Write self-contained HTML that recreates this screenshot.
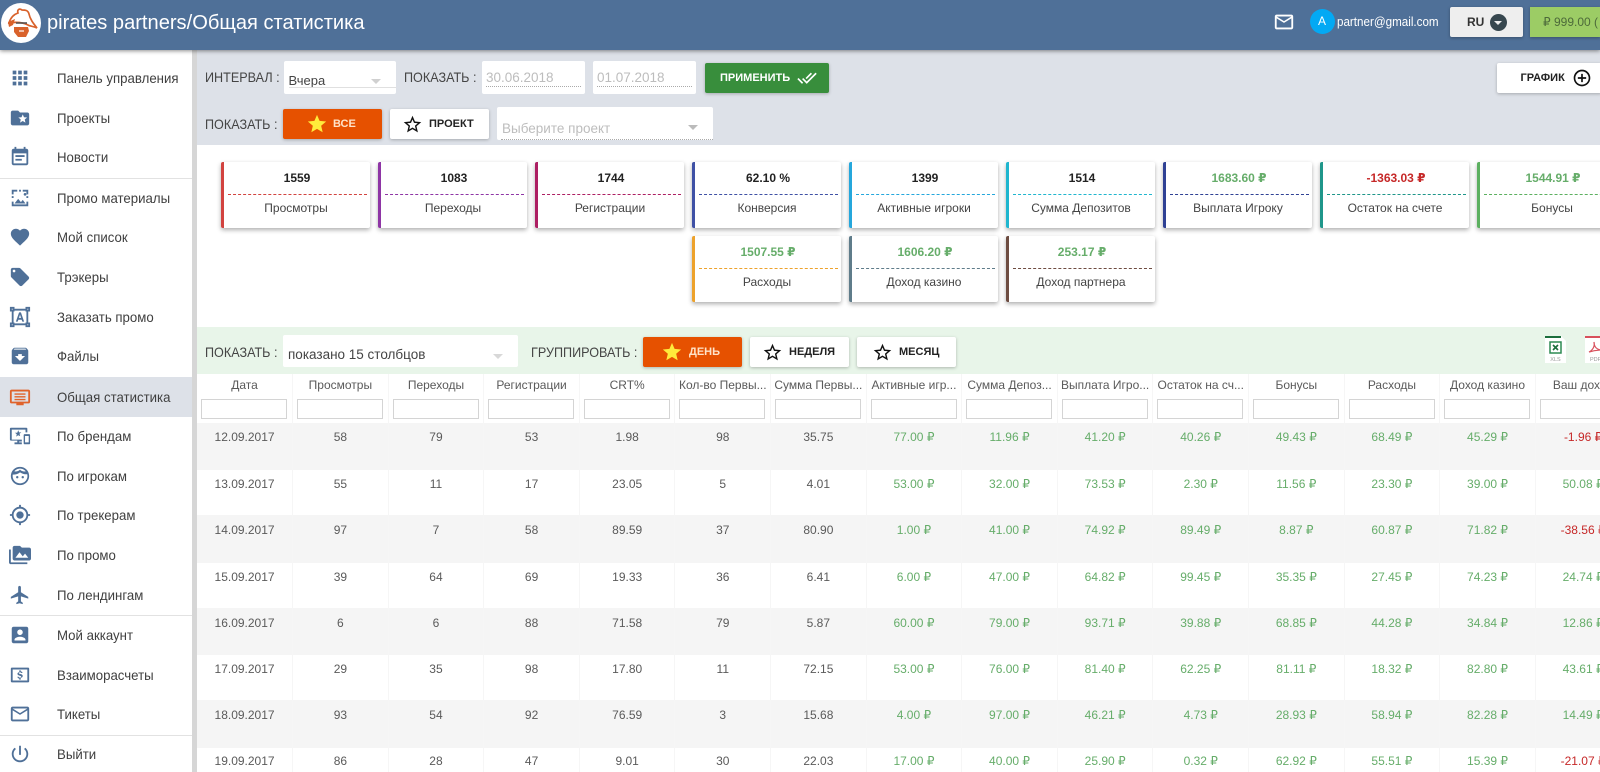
<!DOCTYPE html>
<html lang="ru">
<head>
<meta charset="utf-8">
<title>pirates partners</title>
<style>
html,body{margin:0;padding:0;width:1600px;height:772px;overflow:hidden;background:#fff}
body{font-family:"Liberation Sans","DejaVu Sans",sans-serif;color:#424242;position:relative}
#r{position:absolute;left:0;top:0;width:1600px;height:772px;overflow:hidden;filter:blur(.35px);background:#fff}
.a{position:absolute;white-space:nowrap}
.c{position:absolute;white-space:nowrap;transform:translateY(-50%);line-height:16px}
.hd{left:0;top:0;width:1600px;height:50px;background:#4f7098;box-shadow:0 1px 4px rgba(0,0,0,.45);z-index:5}
.side{left:0;top:50px;width:192px;height:722px;background:#fff}
.strip{left:192px;top:50px;width:5px;height:722px;background:#d6d6d6}
.it{position:absolute;left:56.500px;font-size:14px;line-height:16px;transform:translateY(-50%) scaleX(.945);transform-origin:left center;color:#3f3f3f;white-space:nowrap}
.ic{position:absolute;left:8.500px;width:22px;height:22px;fill:#4f7098;transform:translateY(-50%)}
.div{position:absolute;left:0;width:192px;height:1px;background:#e2e2e2}
.gray{left:197px;top:50px;width:1403px;height:95px;background:#dde1e8}
.white{background:#fff;border-radius:2px}
.lb{font-size:14px;color:#444;transform:translateY(-50%) scaleX(.9);transform-origin:left center}
.btn{position:absolute;height:30px;width:99px;background:#fff;border-radius:2px;box-shadow:0 1px 3px rgba(0,0,0,.25)}
.btn.o{background:#e65100}
.btxt{font-size:11px;font-weight:bold;color:#222}
.card{position:absolute;width:146px;height:66px;background:#fff;border-left:3px solid;border-radius:2px;box-shadow:0 2px 5px rgba(0,0,0,.32)}
.card .v{position:absolute;left:0;right:0;top:8px;text-align:center;font-size:12px;font-weight:bold;line-height:16px;color:#222}
.card .d{position:absolute;left:4px;width:139px;top:32px;border-top:1px dashed}
.card .l{position:absolute;left:-2px;right:0;top:38px;text-align:center;font-size:12px;line-height:16px;color:#444}
.g{color:#66ad6a!important}
.rd{color:#c62828!important}
.green{left:197px;top:327px;width:1403px;height:47px;background:#e8f5e9}
.arrow{position:absolute;width:0;height:0;border-left:5px solid transparent;border-right:5px solid transparent;border-top:5px solid #c8c8c8}
.tw{position:absolute;left:197px;top:374px;width:1403px;height:398px;overflow:hidden}
table{border-collapse:collapse;table-layout:fixed;width:1434px;font-size:12px;color:#5a5a5a}
td,th{width:95.6px;padding:0 3px;text-align:center;vertical-align:top;box-sizing:border-box;border-right:1px solid #f6f6f6;overflow:hidden;white-space:nowrap;font-weight:normal}
.th td{height:22px;line-height:22px;background:#fff}
.fl td{height:27px;padding:3px 5px 0;background:#fff}
.fl i{display:block;height:18px;box-sizing:content-box;margin-left:-1px;border:1px solid #d4d4d4;border-width:1px 1px 1.5px;width:84px;background:#fff}
.rw td{line-height:14px;padding-top:7px}
.rw.p8 td{padding-top:8px}
.rw.p6 td{padding-top:6px}
.s td{background:#f5f5f5}
</style>
</head>
<body>
<div id="r">
<!-- header -->
<div class="a hd">
  <svg class="a" style="left:1px;top:2px" width="42" height="42" viewBox="0 0 42 42">
    <circle cx="20" cy="21" r="20" fill="#fff"/>
    <path d="M8 21C10 14 14 12 17 11C16 8 18 6 21 8C24 8 27 8 28 12C29 17 32 21 36 26C32 24 28 24 27 23C21 20 14 20 8 21Z" fill="none" stroke="#d9622b" stroke-width="1.700"/>
    <path d="M7 20L14 17L12 23L8 25Z" fill="#d9622b"/>
    <path d="M13 25H27L28 29L25 35H17L13 30Z" fill="#d9622b"/>
    <path d="M15 21H26" stroke="#555" stroke-width="1.600"/>
    <path d="M18 29H23" stroke="#fff" stroke-width="1.200"/>
  </svg>
  <div class="c" style="left:47px;top:23px;font-size:20.100px;color:#fff;line-height:24px">pirates partners/Общая статистика</div>
  <svg class="a" style="left:1273px;top:10px;fill:#fff" width="22" height="24" viewBox="0 0 24 24"><path d="M20 4H4c-1.100 0-1.990.9-1.990 2L2 18c0 1.100.9 2 2 2h16c1.100 0 2-.9 2-2V6c0-1.100-.9-2-2-2zm0 14H4V8l8 5 8-5v10zm-8-7L4 6h16l-8 5z"/></svg>
  <div class="a" style="left:1309.500px;top:9px;width:25px;height:25px;border-radius:50%;background:#03a9f4;color:#fff;font-size:12px;line-height:25px;text-align:center">A</div>
  <div class="c" style="left:1336.500px;top:22px;font-size:12.500px;color:#fff;transform:translateY(-50%) scaleX(.93);transform-origin:left center">partner@gmail.com</div>
  <div class="a" style="left:1450px;top:7px;width:73px;height:30px;background:#eeeeee;border-radius:2px;box-shadow:0 1px 3px rgba(0,0,0,.3)"></div>
  <div class="c" style="left:1467px;top:22px;font-size:12px;font-weight:bold;color:#333">RU</div>
  <div class="a" style="left:1489.500px;top:14px;width:17px;height:17px;border-radius:50%;background:#37474f"></div>
  <div class="a" style="left:1494px;top:21px;width:0;height:0;border-left:4px solid transparent;border-right:4px solid transparent;border-top:4px solid #eee"></div>
  <div class="a" style="left:1530px;top:7px;width:70px;height:30px;background:#9ccc65;box-shadow:0 1px 3px rgba(0,0,0,.3)"></div>
  <div class="c" style="left:1543px;top:22px;font-size:12px;color:#4d6a3a">₽ 999.00 (</div>
</div>
<!-- sidebar -->
<div class="a side"></div>
<div class="a strip"></div>
<div class="a" style="left:0;top:377px;width:192px;height:40px;background:#dde1e8"></div>
<div class="div" style="top:178px"></div>
<div class="div" style="top:615px"></div>
<div class="div" style="top:735px"></div>

<svg class="ic" style="top:78px" viewBox="0 0 24 24"><path d="M4 8h4V4H4v4zm6 12h4v-4h-4v4zm-6 0h4v-4H4v4zm0-6h4v-4H4v4zm6 0h4v-4h-4v4zm6-10v4h4V4h-4zm-6 4h4V4h-4v4zm6 6h4v-4h-4v4zm0 6h4v-4h-4v4z"/></svg>
<div class="it" style="top:78px">Панель управления</div>
<svg class="ic" style="top:118px" viewBox="0 0 24 24"><path d="M20 6h-8l-2-2H4c-1.100 0-1.990.9-1.990 2L2 18c0 1.100.9 2 2 2h16c1.100 0 2-.9 2-2V8c0-1.100-.9-2-2-2zm-2.060 11L15 15.280 12.060 17l.78-3.330-2.590-2.240 3.410-.29L15 8l1.340 3.140 3.410.29-2.590 2.240.78 3.330z"/></svg>
<div class="it" style="top:118px">Проекты</div>
<svg class="ic" style="top:157px" viewBox="0 0 24 24"><path d="M17 10H7v2h10v-2zm2-7h-1V1h-2v2H8V1H6v2H5c-1.110 0-1.990.9-1.990 2L3 19c0 1.100.89 2 2 2h14c1.100 0 2-.9 2-2V5c0-1.100-.9-2-2-2zm0 16H5V8h14v11zm-5-5H7v2h7v-2z"/></svg>
<div class="it" style="top:157px">Новости</div>
<svg class="ic" style="top:198px" viewBox="0 0 24 24"><path d="M3 3h6v2H5v3H3V3zm12 0h6v5h-2V5h-4V3zM3 16h2v3h14v-3h2v5H3v-5zm3 2l4-5 3 3.500 2-2.500 3 4H6zM11 3h2v2h-2zM3 10h2v2H3zm16 0h2v2h-2zm-3-2a1.500 1.500 0 1 1 0 .01z"/></svg>
<div class="it" style="top:198px">Промо материалы</div>
<svg class="ic" style="top:237px" viewBox="0 0 24 24"><path d="M12 21.350l-1.450-1.320C5.400 15.360 2 12.280 2 8.500 2 5.420 4.420 3 7.500 3c1.740 0 3.410.81 4.500 2.090C13.090 3.810 14.760 3 16.500 3 19.580 3 22 5.420 22 8.500c0 3.780-3.400 6.860-8.550 11.540L12 21.350z"/></svg>
<div class="it" style="top:237px">Мой список</div>
<svg class="ic" style="top:277px" viewBox="0 0 24 24"><path d="M21.410 11.580l-9-9C12.050 2.220 11.550 2 11 2H4c-1.100 0-2 .9-2 2v7c0 .55.22 1.050.59 1.420l9 9c.36.36.86.58 1.410.58.55 0 1.050-.22 1.410-.59l7-7c.37-.36.59-.86.59-1.410 0-.55-.23-1.060-.59-1.420zM5.500 7C4.670 7 4 6.330 4 5.500S4.670 4 5.500 4 7 4.670 7 5.500 6.330 7 5.500 7z"/></svg>
<div class="it" style="top:277px">Трэкеры</div>
<svg class="ic" style="top:317px" viewBox="0 0 24 24"><path d="M1 1h5v2h12V1h5v5h-2v12h2v5h-5v-2H6v2H1v-5h2V6H1V1zm2 2v1h1V3H3zm17 0v1h1V3h-1zM5 6v12h1v1h12v-1h1V6h-1V5H6v1H5zM3 20v1h1v-1H3zm17 0v1h1v-1h-1zM11 7h2l3.500 10h-2l-.7-2h-3.600l-.7 2h-2L11 7zm-.2 6h2.400L12 9.500 10.800 13z"/></svg>
<div class="it" style="top:317px">Заказать промо</div>
<svg class="ic" style="top:356px" viewBox="0 0 24 24"><path d="M20.540 5.230l-1.390-1.680C18.880 3.210 18.470 3 18 3H6c-.47 0-.88.21-1.160.55L3.460 5.230C3.170 5.570 3 6.020 3 6.500V19c0 1.100.9 2 2 2h14c1.100 0 2-.9 2-2V6.500c0-.48-.17-.93-.46-1.270zM12 17.500L6.500 12H10v-2h4v2h3.500L12 17.500zM5.120 5l.81-1h12l.94 1H5.120z"/></svg>
<div class="it" style="top:356px">Файлы</div>
<svg class="ic" style="top:397px;fill:#e0622a" viewBox="0 0 24 24"><path d="M3 4h18a2 2 0 0 1 2 2v11a2 2 0 0 1-2 2h-5v2H8v-2H3a2 2 0 0 1-2-2V6a2 2 0 0 1 2-2zm0 2v11h18V6H3zm3 2h12v1.500H6V8zm0 3h12v1.500H6V11zm0 3h12v1.500H6V14z"/></svg>
<div class="it" style="top:397px">Общая статистика</div>
<svg class="ic" style="top:436px" viewBox="0 0 24 24"><path d="M2 3h17a1 1 0 0 1 1 1v4h-2V5H3v11h11v2h-3v1h3v2H6v-2h3v-2H2a1 1 0 0 1-1-1V4a1 1 0 0 1 1-1zm8 2.500l1 2.500h2.500l-2 1.600.7 2.600L10 11.200l-2.200 1.500.7-2.600-2-1.600H9l1-2.500zM17 10h5a1 1 0 0 1 1 1v9a1 1 0 0 1-1 1h-5a1 1 0 0 1-1-1v-9a1 1 0 0 1 1-1zm.5 2v7h4v-7h-4z"/></svg>
<div class="it" style="top:436px">По брендам</div>
<svg class="ic" style="top:476px" viewBox="0 0 24 24"><path d="M12 2a10 10 0 1 1 0 20 10 10 0 0 1 0-20zm0 2c-2.500 0-4.800 1.200-6.200 3 3 .2 5-.5 6.200-2 1.500 1.600 3.500 2.300 6.300 2-1.400-1.800-3.800-3-6.300-3zM4.100 10.500A8 8 0 0 0 12 20a8 8 0 0 0 7.900-9.900c-2.700.2-5-.3-7.900-2.100-2 1.600-4.600 2.500-7.900 2.500zM9 12a1.300 1.300 0 1 1 0 2.600A1.300 1.300 0 0 1 9 12zm6 0a1.300 1.300 0 1 1 0 2.600 1.300 1.300 0 0 1 0-2.600z"/></svg>
<div class="it" style="top:476px">По игрокам</div>
<svg class="ic" style="top:515px" viewBox="0 0 24 24"><path d="M12 8c-2.210 0-4 1.790-4 4s1.790 4 4 4 4-1.790 4-4-1.790-4-4-4zm8.940 3c-.46-4.170-3.770-7.480-7.940-7.940V1h-2v2.060C6.830 3.520 3.520 6.830 3.060 11H1v2h2.060c.46 4.170 3.770 7.480 7.940 7.940V23h2v-2.060c4.170-.46 7.480-3.770 7.940-7.940H23v-2h-2.060zM12 19c-3.870 0-7-3.130-7-7s3.130-7 7-7 7 3.130 7 7-3.130 7-7 7z"/></svg>
<div class="it" style="top:515px">По трекерам</div>
<svg class="ic" style="top:555px" viewBox="0 0 24 24"><path d="M2 6H0v5h.01L0 20c0 1.100.9 2 2 2h18v-2H2V6zm20-2h-8l-2-2H6c-1.100 0-1.990.9-1.990 2L4 16c0 1.100.9 2 2 2h16c1.100 0 2-.9 2-2V6c0-1.100-.9-2-2-2zM7 15l4.500-6 3.500 4.510 2.500-3.010L21 15H7z"/></svg>
<div class="it" style="top:555px">По промо</div>
<svg class="ic" style="top:595px" viewBox="0 0 24 24"><path d="M21 16v-2l-8-5V3.500c0-.83-.67-1.500-1.500-1.500S10 2.670 10 3.500V9l-8 5v2l8-2.500V19l-2 1.500V22l3.500-1 3.500 1v-1.500L13 19v-5.500l8 2.500z"/></svg>
<div class="it" style="top:595px">По лендингам</div>
<svg class="ic" style="top:635px" viewBox="0 0 24 24"><path d="M3 5v14c0 1.100.89 2 2 2h14c1.100 0 2-.9 2-2V5c0-1.100-.9-2-2-2H5c-1.110 0-2 .9-2 2zm12 4c0 1.660-1.340 3-3 3s-3-1.340-3-3 1.340-3 3-3 3 1.340 3 3zm-9 8c0-2 4-3.100 6-3.100s6 1.100 6 3.100v1H6v-1z"/></svg>
<div class="it" style="top:635px">Мой аккаунт</div>
<svg class="ic" style="top:675px" viewBox="0 0 24 24"><path d="M3 4h18a1 1 0 0 1 1 1v14a1 1 0 0 1-1 1H3a1 1 0 0 1-1-1V5a1 1 0 0 1 1-1zm1 2v12h16V6H4zm7.200 1h1.600v1.100c1 .1 1.800.7 2 1.700h-1.500c-.1-.4-.5-.7-1.300-.7-.8 0-1.200.3-1.200.8s.4.700 1.500 1c1.500.3 2.700.8 2.700 2.200 0 1.100-.9 1.800-2.200 2V17h-1.600v-1.100c-1.100-.2-2-.9-2.100-2h1.500c.1.500.6.900 1.400.9.900 0 1.300-.4 1.300-.9s-.4-.8-1.600-1.100c-1.400-.3-2.500-.8-2.500-2.100 0-1 .8-1.700 2-1.900V7z"/></svg>
<div class="it" style="top:675px">Взаиморасчеты</div>
<svg class="ic" style="top:714px" viewBox="0 0 24 24"><path d="M20 4H4c-1.100 0-1.990.9-1.990 2L2 18c0 1.100.9 2 2 2h16c1.100 0 2-.9 2-2V6c0-1.100-.9-2-2-2zm0 14H4V8l8 5 8-5v10zm-8-7L4 6h16l-8 5z"/></svg>
<div class="it" style="top:714px">Тикеты</div>
<svg class="ic" style="top:754px" viewBox="0 0 24 24"><path d="M13 3h-2v10h2V3zm4.830 2.170l-1.420 1.420C17.990 7.860 19 9.810 19 12c0 3.870-3.130 7-7 7s-7-3.130-7-7c0-2.190 1.010-4.140 2.580-5.420L6.170 5.170C4.230 6.820 3 9.260 3 12c0 4.970 4.030 9 9 9s9-4.030 9-9c0-2.740-1.230-5.180-3.170-6.830z"/></svg>
<div class="it" style="top:754px">Выйти</div>

<!-- gray filter area -->
<div class="a gray"></div>
<div class="c lb" style="left:205px;top:77px">ИНТЕРВАЛ :</div>
<div class="a white" style="left:284px;top:61px;width:112px;height:33px"></div>
<div class="c" style="left:288.500px;top:81px;font-size:13px;color:#444">Вчера</div>
<div class="a" style="left:289px;top:87px;width:107px;height:1px;background:#e0e0e0"></div>
<div class="arrow" style="left:371px;top:79px;border-top-color:#d0d0d0"></div>
<div class="c lb" style="left:404px;top:77px">ПОКАЗАТЬ :</div>
<div class="a white" style="left:482px;top:61px;width:103px;height:33px"></div>
<div class="c" style="left:486px;top:78px;font-size:13.500px;color:#bdbdbd">30.06.2018</div>
<div class="a" style="left:486px;top:86px;width:95px;border-top:1px dotted #aaa"></div>
<div class="a white" style="left:593px;top:61px;width:103px;height:33px"></div>
<div class="c" style="left:597px;top:78px;font-size:13.500px;color:#bdbdbd">01.07.2018</div>
<div class="a" style="left:597px;top:86px;width:95px;border-top:1px dotted #aaa"></div>
<div class="btn" style="left:705px;top:63px;width:124px;background:#388e3c"></div>
<div class="c btxt" style="left:720px;top:78px;color:#fff">ПРИМЕНИТЬ</div>
<svg class="a" style="left:797px;top:68px;fill:#fff" width="20" height="20" viewBox="0 0 24 24"><path d="M18 7l-1.410-1.410-6.340 6.340 1.410 1.410L18 7zm4.240-1.410L11.660 16.170 7.480 12l-1.410 1.410L11.660 19l12-12-1.420-1.410zM.41 13.410L6 19l1.410-1.410L1.830 12 .41 13.410z"/></svg>
<div class="btn" style="left:1497px;top:63px;width:105px"></div>
<div class="c btxt" style="left:1520.500px;top:77.500px">ГРАФИК</div>
<svg class="a" style="left:1572px;top:68px;fill:#111" width="20" height="20" viewBox="0 0 24 24"><path d="M13 7h-2v4H7v2h4v4h2v-4h4v-2h-4V7zm-1-5C6.480 2 2 6.480 2 12s4.480 10 10 10 10-4.480 10-10S17.520 2 12 2zm0 18c-4.410 0-8-3.590-8-8s3.590-8 8-8 8 3.590 8 8-3.590 8-8 8z"/></svg>

<div class="c lb" style="left:205px;top:124px">ПОКАЗАТЬ :</div>
<div class="btn o" style="left:283px;top:109px"></div>
<svg class="a" style="left:306px;top:113px;fill:#ffeb3b" width="22" height="22" viewBox="0 0 24 24"><path d="M12 17.270L18.180 21l-1.640-7.030L22 9.240l-7.190-.61L12 2 9.190 8.630 2 9.240l5.460 4.730L5.820 21z"/></svg>
<div class="c btxt" style="left:333px;top:124px;color:#ffe3c8">ВСЕ</div>
<div class="btn" style="left:390px;top:109px"></div>
<svg class="a" style="left:402px;top:114px;fill:#111" width="21" height="21" viewBox="0 0 24 24"><path d="M22 9.240l-7.190-.62L12 2 9.190 8.630 2 9.240l5.460 4.730L5.820 21 12 17.270 18.180 21l-1.630-7.030L22 9.240zM12 15.400l-3.760 2.270 1-4.280-3.320-2.880 4.380-.38L12 6.100l1.710 4.040 4.380.38-3.320 2.880 1 4.280L12 15.400z"/></svg>
<div class="c btxt" style="left:429px;top:123.500px">ПРОЕКТ</div>
<div class="a white" style="left:497px;top:107px;width:216px;height:33px"></div>
<div class="c" style="left:502px;top:128.500px;font-size:13.500px;color:#bdbdbd">Выберите проект</div>
<div class="arrow" style="left:688px;top:125px;border-top-color:#bbb"></div>
<div class="a" style="left:501px;top:139px;width:212px;border-top:1px dotted #aaa"></div>

<!-- cards -->
<div class="card" style="left:221px;top:162px;border-color:#d2433f"><div class="v">1559</div><div class="d" style="border-color:#d2433f"></div><div class="l">Просмотры</div></div>
<div class="card" style="left:378px;top:162px;border-color:#8e35a5"><div class="v">1083</div><div class="d" style="border-color:#8e35a5"></div><div class="l">Переходы</div></div>
<div class="card" style="left:535px;top:162px;border-color:#ad1f63"><div class="v">1744</div><div class="d" style="border-color:#ad1f63"></div><div class="l">Регистрации</div></div>
<div class="card" style="left:692px;top:162px;border-color:#3f51a5"><div class="v">62.10 %</div><div class="d" style="border-color:#3f51a5"></div><div class="l">Конверсия</div></div>
<div class="card" style="left:849px;top:162px;border-color:#25a7dc"><div class="v">1399</div><div class="d" style="border-color:#25a7dc"></div><div class="l">Активные игроки</div></div>
<div class="card" style="left:1006px;top:162px;border-color:#1fb6cf"><div class="v">1514</div><div class="d" style="border-color:#1fb6cf"></div><div class="l">Сумма Депозитов</div></div>
<div class="card" style="left:1163px;top:162px;border-color:#2f4194"><div class="v g">1683.60 ₽</div><div class="d" style="border-color:#2f4194"></div><div class="l">Выплата Игроку</div></div>
<div class="card" style="left:1320px;top:162px;border-color:#1f968a"><div class="v rd">-1363.03 ₽</div><div class="d" style="border-color:#1f968a"></div><div class="l">Остаток на счете</div></div>
<div class="card" style="left:1477px;top:162px;border-color:#5cb060"><div class="v g">1544.91 ₽</div><div class="d" style="border-color:#5cb060"></div><div class="l">Бонусы</div></div>
<div class="card" style="left:692px;top:236px;border-color:#eda22c"><div class="v g">1507.55 ₽</div><div class="d" style="border-color:#eda22c"></div><div class="l">Расходы</div></div>
<div class="card" style="left:849px;top:236px;border-color:#5f7c8a"><div class="v g">1606.20 ₽</div><div class="d" style="border-color:#5f7c8a"></div><div class="l">Доход казино</div></div>
<div class="card" style="left:1006px;top:236px;border-color:#6d4c41"><div class="v g">253.17 ₽</div><div class="d" style="border-color:#6d4c41"></div><div class="l">Доход партнера</div></div>

<!-- green toolbar -->
<div class="a green"></div>
<div class="c lb" style="left:205px;top:352px">ПОКАЗАТЬ :</div>
<div class="a white" style="left:283px;top:335px;width:235px;height:32px"></div>
<div class="c" style="left:288px;top:355px;font-size:13.500px;color:#444">показано 15 столбцов</div>
<div class="arrow" style="left:493px;top:354px;border-top-color:#d8d8d8"></div>
<div class="c lb" style="left:531px;top:352px">ГРУППИРОВАТЬ :</div>
<div class="btn o" style="left:643px;top:337px"></div>
<svg class="a" style="left:661px;top:341px;fill:#ffeb3b" width="22" height="22" viewBox="0 0 24 24"><path d="M12 17.270L18.180 21l-1.640-7.030L22 9.240l-7.190-.61L12 2 9.190 8.630 2 9.240l5.460 4.730L5.820 21z"/></svg>
<div class="c btxt" style="left:689px;top:352px;color:#ffe3c8">ДЕНЬ</div>
<div class="btn" style="left:750px;top:337px"></div>
<svg class="a" style="left:762px;top:342px;fill:#111" width="21" height="21" viewBox="0 0 24 24"><path d="M22 9.240l-7.190-.62L12 2 9.190 8.630 2 9.240l5.460 4.730L5.820 21 12 17.270 18.180 21l-1.630-7.030L22 9.240zM12 15.400l-3.760 2.270 1-4.280-3.320-2.880 4.380-.38L12 6.100l1.710 4.040 4.380.38-3.320 2.880 1 4.280L12 15.400z"/></svg>
<div class="c btxt" style="left:789px;top:352px">НЕДЕЛЯ</div>
<div class="btn" style="left:857px;top:337px"></div>
<svg class="a" style="left:872px;top:342px;fill:#111" width="21" height="21" viewBox="0 0 24 24"><path d="M22 9.240l-7.190-.62L12 2 9.190 8.630 2 9.240l5.460 4.730L5.820 21 12 17.270 18.180 21l-1.630-7.030L22 9.240zM12 15.400l-3.760 2.270 1-4.280-3.320-2.880 4.380-.38L12 6.100l1.710 4.040 4.380.38-3.320 2.880 1 4.280L12 15.400z"/></svg>
<div class="c btxt" style="left:899px;top:352px">МЕСЯЦ</div>
<svg class="a" style="left:1545px;top:336px" width="22" height="28" viewBox="0 0 22 28">
  <path d="M0 0H16L21 5V27H0Z" fill="#fff"/>
  <rect width="16" height="2" fill="#1b6e3c"/>
  <rect x="5" y="6" width="11" height="11" fill="none" stroke="#2d8a52" stroke-width="1.500"/>
  <path d="M8 9L13 14M13 9L8 14" stroke="#1b6e3c" stroke-width="1.600"/>
  <text x="10.500" y="25" font-size="5.500" fill="#999" text-anchor="middle" font-family="Liberation Sans, sans-serif">XLS</text>
</svg>
<svg class="a" style="left:1585px;top:336px" width="22" height="28" viewBox="0 0 22 28">
  <path d="M0 0H16L21 5V27H0Z" fill="#fff"/>
  <rect width="16" height="2" fill="#d8505c"/>
  <path d="M4 16C8 14 10 10 9 6C9 11 12 14 17 14C12 14 7 15 4 16Z" fill="none" stroke="#d8505c" stroke-width="1.200"/>
  <text x="10.500" y="25" font-size="5.500" fill="#999" text-anchor="middle" font-family="Liberation Sans, sans-serif">PDF</text>
</svg>

<!-- table -->
<div class="tw">
<table>
<tr class="th"><td>Дата</td><td>Просмотры</td><td>Переходы</td><td>Регистрации</td><td>CRT%</td><td>Кол-во Первы...</td><td>Сумма Первы...</td><td>Активные игр...</td><td>Сумма Депоз...</td><td>Выплата Игро...</td><td>Остаток на сч...</td><td>Бонусы</td><td>Расходы</td><td>Доход казино</td><td>Ваш доход</td></tr>
<tr class="fl"><td><i></i></td><td><i></i></td><td><i></i></td><td><i></i></td><td><i></i></td><td><i></i></td><td><i></i></td><td><i></i></td><td><i></i></td><td><i></i></td><td><i></i></td><td><i></i></td><td><i></i></td><td><i></i></td><td><i></i></td></tr>
<tr class="rw s" style="height:47px"><td>12.09.2017</td><td>58</td><td>79</td><td>53</td><td>1.98</td><td>98</td><td>35.75</td><td class="g">77.00 ₽</td><td class="g">11.96 ₽</td><td class="g">41.20 ₽</td><td class="g">40.26 ₽</td><td class="g">49.43 ₽</td><td class="g">68.49 ₽</td><td class="g">45.29 ₽</td><td class="rd">-1.96 ₽</td></tr>
<tr class="rw" style="height:45px"><td>13.09.2017</td><td>55</td><td>11</td><td>17</td><td>23.05</td><td>5</td><td>4.01</td><td class="g">53.00 ₽</td><td class="g">32.00 ₽</td><td class="g">73.53 ₽</td><td class="g">2.30 ₽</td><td class="g">11.56 ₽</td><td class="g">23.30 ₽</td><td class="g">39.00 ₽</td><td class="g">50.08 ₽</td></tr>
<tr class="rw s p8" style="height:48px"><td>14.09.2017</td><td>97</td><td>7</td><td>58</td><td>89.59</td><td>37</td><td>80.90</td><td class="g">1.00 ₽</td><td class="g">41.00 ₽</td><td class="g">74.92 ₽</td><td class="g">89.49 ₽</td><td class="g">8.87 ₽</td><td class="g">60.87 ₽</td><td class="g">71.82 ₽</td><td class="rd">-38.56 ₽</td></tr>
<tr class="rw" style="height:45px"><td>15.09.2017</td><td>39</td><td>64</td><td>69</td><td>19.33</td><td>36</td><td>6.41</td><td class="g">6.00 ₽</td><td class="g">47.00 ₽</td><td class="g">64.82 ₽</td><td class="g">99.45 ₽</td><td class="g">35.35 ₽</td><td class="g">27.45 ₽</td><td class="g">74.23 ₽</td><td class="g">24.74 ₽</td></tr>
<tr class="rw s p8" style="height:47px"><td>16.09.2017</td><td>6</td><td>6</td><td>88</td><td>71.58</td><td>79</td><td>5.87</td><td class="g">60.00 ₽</td><td class="g">79.00 ₽</td><td class="g">93.71 ₽</td><td class="g">39.88 ₽</td><td class="g">68.85 ₽</td><td class="g">44.28 ₽</td><td class="g">34.84 ₽</td><td class="g">12.86 ₽</td></tr>
<tr class="rw" style="height:45px"><td>17.09.2017</td><td>29</td><td>35</td><td>98</td><td>17.80</td><td>11</td><td>72.15</td><td class="g">53.00 ₽</td><td class="g">76.00 ₽</td><td class="g">81.40 ₽</td><td class="g">62.25 ₽</td><td class="g">81.11 ₽</td><td class="g">18.32 ₽</td><td class="g">82.80 ₽</td><td class="g">43.61 ₽</td></tr>
<tr class="rw s p8" style="height:48px"><td>18.09.2017</td><td>93</td><td>54</td><td>92</td><td>76.59</td><td>3</td><td>15.68</td><td class="g">4.00 ₽</td><td class="g">97.00 ₽</td><td class="g">46.21 ₽</td><td class="g">4.73 ₽</td><td class="g">28.93 ₽</td><td class="g">58.94 ₽</td><td class="g">82.28 ₽</td><td class="g">14.49 ₽</td></tr>
<tr class="rw p6" style="height:45px"><td>19.09.2017</td><td>86</td><td>28</td><td>47</td><td>9.01</td><td>30</td><td>22.03</td><td class="g">17.00 ₽</td><td class="g">40.00 ₽</td><td class="g">25.90 ₽</td><td class="g">0.32 ₽</td><td class="g">62.92 ₽</td><td class="g">55.51 ₽</td><td class="g">15.39 ₽</td><td class="rd">-21.07 ₽</td></tr>
</table>
</div>
</div>
</body>
</html>
